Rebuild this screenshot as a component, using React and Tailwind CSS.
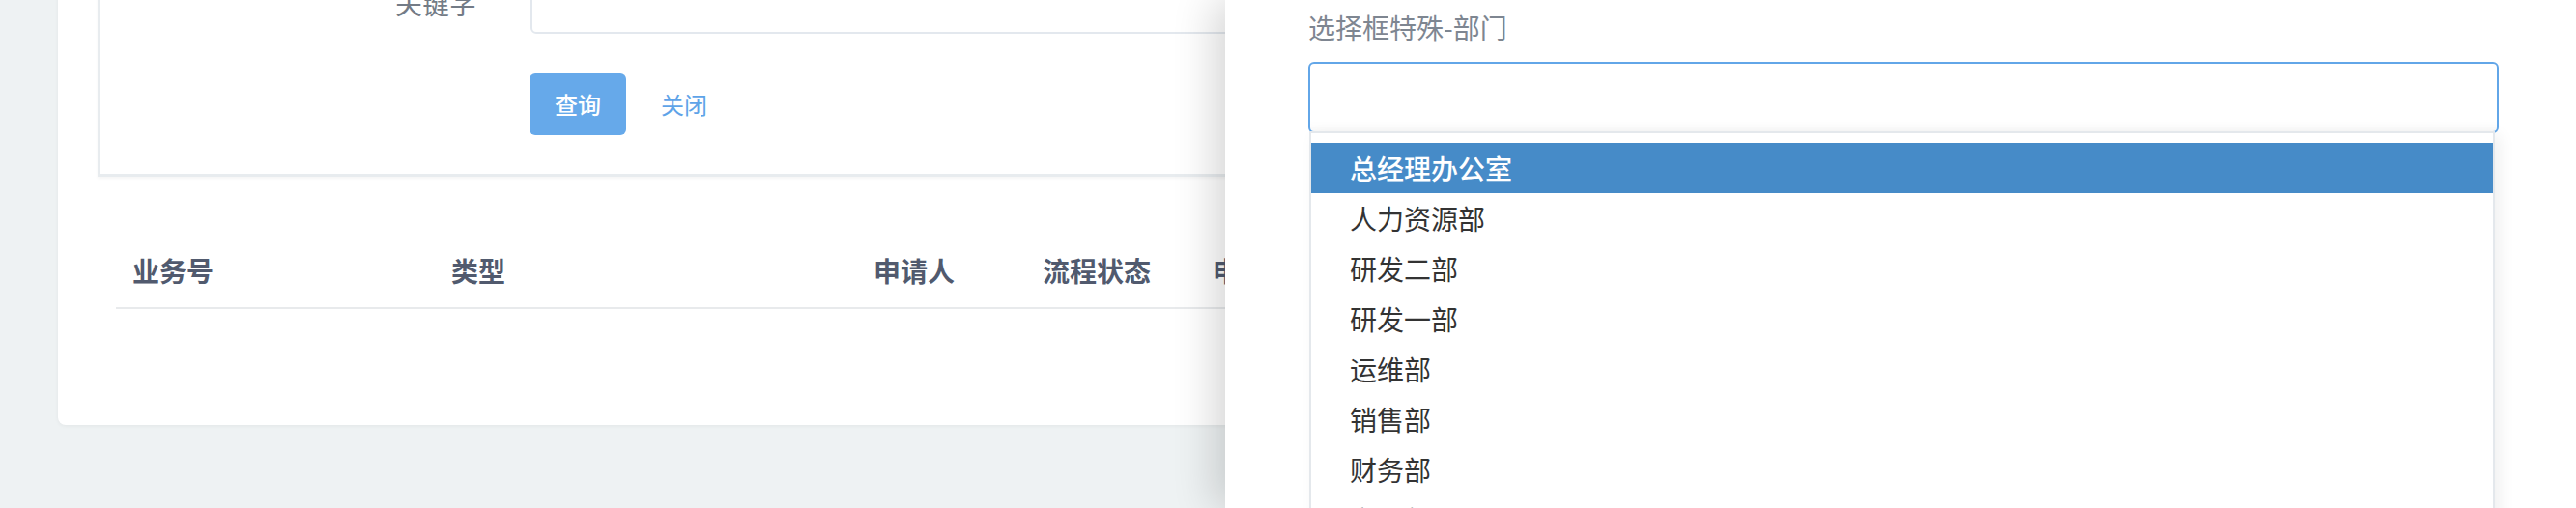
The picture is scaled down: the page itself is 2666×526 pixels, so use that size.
const departments = ['总经理办公室', '人力资源部', '研发二部', '研发一部', '运维部', '销售部', '财务部', '市场部'];

const columns = [
  { title: '业务号', w: 'w-[330px]' },
  { title: '类型', w: 'w-[437px]' },
  { title: '申请人', w: 'w-[175px]' },
  { title: '流程状态', w: 'w-[176px]' },
  { title: '申请时间', w: 'w-[260px]' },
];

export default function App() {
  return (
    <div className="relative h-[526px] w-[2666px] overflow-hidden bg-[#eef2f3] font-['Noto_Sans_CJK_SC','Noto_Sans',sans-serif]">
      {/* page (scrolled) */}
      <div className="px-[60px]">
        <div className="-mt-[110px] rounded-b-[8px] bg-white px-[41px] pt-[41px] pb-[120px] shadow-[0_1px_4px_rgba(0,0,0,0.05)]">
          {/* search form */}
          <div className="border-2 border-b-[3px] border-[#e8ecef] bg-white pt-[38px] pb-[40px] shadow-[0_2px_3px_rgba(0,0,0,0.04)]">
            <div className="flex h-[64px] items-center">
              <label className="w-[446px] shrink-0 pr-[56px] text-right text-[28px] text-[#737b86]">关键字</label>
              <div className="h-[64px] flex-1 rounded-[6px] border-2 border-[#e3e8ee] bg-white" />
            </div>
            <div className="mt-[41px] flex items-center pl-[445px]">
              <button className="h-[64px] w-[100px] rounded-[6px] bg-[#66a9ea] text-[24px] font-medium text-white">查询</button>
              <button className="ml-[36px] text-[24px] text-[#5ea3e8]">关闭</button>
            </div>
          </div>

          {/* table */}
          <div className="mx-[19px] mt-[58px]">
            <div className="flex h-[79px] items-center border-b-2 border-[#e8eaec]">
              {columns.map((c) => (
                <div key={c.title} className={`${c.w} shrink-0 pl-[17px] text-[28px] font-bold text-[#515a6e]`}>
                  {c.title}
                </div>
              ))}
            </div>
          </div>
        </div>
      </div>

      {/* drawer */}
      <div className="absolute top-0 right-0 bottom-0 left-[1268px] bg-white pr-[80px] pl-[86px] shadow-[-12px_0_40px_rgba(0,0,0,0.16)]">
        <div className="pt-[8px] text-[28px] leading-[40px] text-[#7e8691]">选择框特殊-部门</div>
        <div className="relative mt-[16px]">
          <div className="h-[74px] rounded-[6px] border-2 border-[#62a6e8] bg-white shadow-[inset_0_-14px_14px_-14px_rgba(0,0,0,0.05)]" />
          <div className="absolute top-[72px] right-[4px] left-px border-2 border-[#e4e8ec] bg-white pt-[10px] shadow-[6px_4px_16px_rgba(0,0,0,0.06)]">
            {departments.map((d, i) => (
              <div
                key={d}
                className={
                  i === 0
                    ? 'h-[52px] bg-[#468bc8] pl-[40px] text-[28px] leading-[52px] font-medium text-white'
                    : 'h-[52px] pl-[40px] text-[28px] leading-[52px] text-[#333]'
                }
              >
                {d}
              </div>
            ))}
          </div>
        </div>
      </div>
    </div>
  );
}
